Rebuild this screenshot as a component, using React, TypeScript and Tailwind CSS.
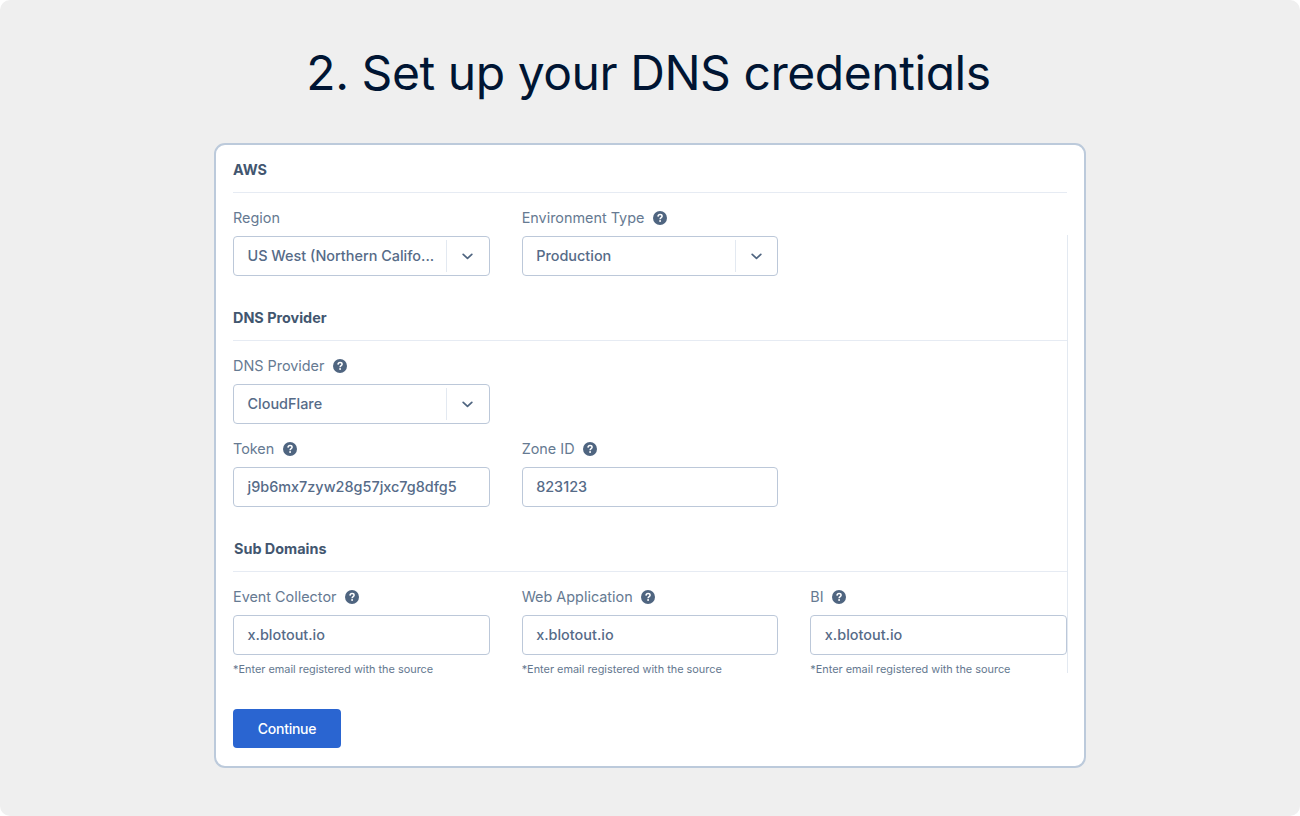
import type { ReactNode } from "react";

function HelpIcon() {
  return (
    <svg className="size-[14px] shrink-0" viewBox="0 0 14 14" fill="none">
      <circle cx="7" cy="7" r="7" fill="#4f6580" />
      <path
        d="M5 5.6C5.1 4.2 6 3.6 7.1 3.6C8.3 3.6 9.1 4.3 9.1 5.3C9.1 6.6 7.1 6.7 7.1 8.2"
        stroke="#fff"
        strokeWidth="1.5"
      />
      <circle cx="7.1" cy="10" r="0.95" fill="#fff" />
    </svg>
  );
}

function Chevron() {
  return (
    <svg className="h-[7px] w-[11px]" viewBox="0 0 11 7" fill="none">
      <path
        d="M1.2 1.4L5.5 5.4L9.8 1.4"
        stroke="#4f6580"
        strokeWidth="1.7"
        strokeLinecap="round"
        strokeLinejoin="round"
      />
    </svg>
  );
}

function SectionHeading({ children }: { children: ReactNode }) {
  return (
    <h2 className="flex h-12 items-center border-b border-[#e6ebf3] pt-[2px] text-[14.4px] font-bold text-[#42566f]">
      {children}
    </h2>
  );
}

type FieldProps = {
  label: string;
  value: string;
  help?: boolean;
  select?: boolean;
  note?: string;
};

function Field({ label, value, help, select, note }: FieldProps) {
  return (
    <div className="flex min-w-0 flex-col">
      <div className="flex h-5 items-center gap-[8.4px] text-[14.4px] text-[#667a92]">
        <span className="whitespace-nowrap">{label}</span>
        {help && <HelpIcon />}
      </div>
      <div className="mt-2 flex h-10 items-center rounded border border-[#bcc8d9] bg-white">
        <span className="flex-1 whitespace-nowrap pl-[13.5px] text-[14.43px] font-medium text-[#566b88]">
          {value}
        </span>
        {select && (
          <span className="flex h-8 w-[42.5px] items-center justify-center border-l border-[#e3e9f1]">
            <Chevron />
          </span>
        )}
      </div>
      {note && (
        <p className="mt-[6px] h-4 whitespace-nowrap text-[10.9px] leading-4 text-[#64788f]">{note}</p>
      )}
    </div>
  );
}

export default function App() {
  const note = "*Enter email registered with the source";
  return (
    <div className="h-[816px] w-[1300px] bg-white font-['Inter',sans-serif]">
      <main className="flex h-full flex-col items-center rounded-[10px] bg-[#efefef] pt-[43px]">
        <h1 className="h-[60px] whitespace-nowrap pr-[3px] text-[48px] leading-[60px] font-normal tracking-[-0.45px] text-[#001533] [font-feature-settings:'cv11']">
          2. Set up your DNS credentials
        </h1>
        <section className="mt-10 h-[625px] w-[872px] rounded-[11px] border-2 border-[#bccadb] bg-white px-[17px]">
          <div className="relative h-[532px]">
            <div className="absolute top-[90px] -right-px bottom-[4px] w-px bg-[#e3e9f1]" />
            <SectionHeading>AWS</SectionHeading>
            <div className="mt-[15px] grid grid-cols-3 gap-x-8">
              <Field label="Region" value="US West (Northern Califo..." select />
              <Field label="Environment Type" value="Production" help select />
            </div>
            <div className="mt-[17px]">
              <SectionHeading>DNS Provider</SectionHeading>
            </div>
            <div className="mt-[15px] grid grid-cols-3 gap-x-8 gap-y-[15px]">
              <div className="col-span-3 grid grid-cols-3 gap-x-8">
                <Field label="DNS Provider" value="CloudFlare" help select />
              </div>
              <Field label="Token" value="j9b6mx7zyw28g57jxc7g8dfg5" help />
              <Field label="Zone ID" value="823123" help />
            </div>
            <div className="mt-[17px]">
              <SectionHeading>
                <span className="pl-px">Sub Domains</span>
              </SectionHeading>
            </div>
            <div className="relative mt-[15px] grid grid-cols-3 gap-x-8">
              <Field label="Event Collector" value="x.blotout.io" help note={note} />
              <Field label="Web Application" value="x.blotout.io" help note={note} />
              <Field label="BI" value="x.blotout.io" help note={note} />
            </div>
          </div>
          <button className="mt-8 flex h-[39px] w-[108px] items-center justify-center rounded bg-[#2a65d1] text-[14px] font-medium tracking-[-0.25px] text-white">
            Continue
          </button>
        </section>
      </main>
    </div>
  );
}
